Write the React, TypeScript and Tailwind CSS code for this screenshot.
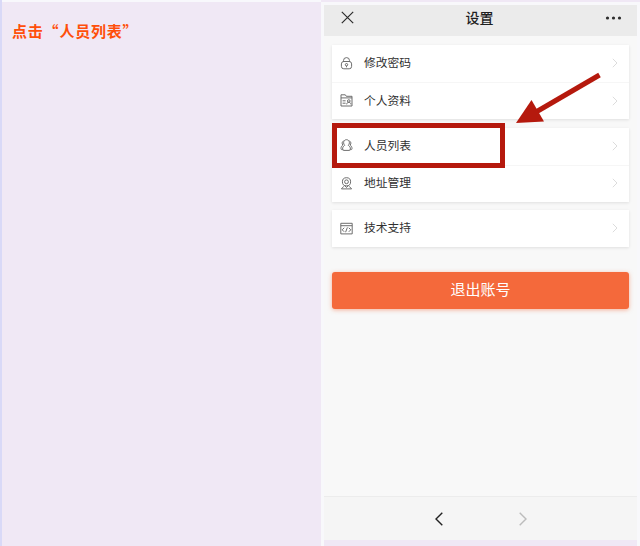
import React from 'react';

type IconName = 'lock' | 'profile' | 'people' | 'address' | 'code';

interface MenuItem {
  label: string;
  icon: IconName;
}

// Data
const groups: MenuItem[][] = [
  [
    { label: '修改密码', icon: 'lock' },
    { label: '个人资料', icon: 'profile' }
  ],
  [
    { label: '人员列表', icon: 'people' },
    { label: '地址管理', icon: 'address' }
  ],
  [{ label: '技术支持', icon: 'code' }]
];

const iconShapes: Record<IconName, React.ReactNode> = {
  lock: (
    <>
      <path d="M3.5 4.9V3.600a3 3 0 0 1 6 0v1.300" />
      <rect x="1.400" y="4.500" width="10.200" height="7.300" rx="2.400" />
      <circle cx="6.500" cy="7.700" r="1.200" />
      <path d="M6.500 8.900v1.400" />
    </>
  ),
  profile: (
    <>
      <path d="M1 12V.8h4.300l1 1.500H12V12zM1 3.900h11" />
      <path d="M2.600 6.800h3M2.600 9.200h3" />
      <circle cx="8.800" cy="7" r="1.300" />
      <path d="M6.700 10.400c0-2.800 4.200-2.800 4.200 0" />
    </>
  ),
  people: (
    <>
      <path d="M6.500.7c1.800 0 2.900 1.300 2.900 3 0 1.200-.4 2-1.100 2.600 1.500.8 2.100 2.100 2.100 3.700 0 .9-.5 1.400-1.400 1.400H4c-.9 0-1.400-.5-1.400-1.400 0-1.600.6-2.900 2.100-3.700-.7-.6-1.100-1.400-1.100-2.600 0-1.700 1.100-3 2.900-3z" />
      <path d="M3.600 1.900C1.900 2.600 1.700 4.900 2.800 6 1.500 6.900 1 8.200 1 9.600c0 .8.600 1.200 1.600 1.200M9.400 1.900c1.700.7 1.900 3 .8 4.100 1.300.9 1.800 2.200 1.800 3.600 0 .8-.6 1.200-1.600 1.200" />
    </>
  ),
  address: (
    <>
      <circle cx="6.500" cy="4.800" r="4.100" />
      <circle cx="6.500" cy="4.800" r="1.900" />
      <path d="M4.500 8.400 6.500 10.500l2-2.100M3.800 9.300 1.400 11.900h10.200L9.200 9.300" />
    </>
  ),
  code: (
    <>
      <path d="M.8 1.300h11.400v10.600H.8zM.8 3.700h11.400" />
      <path d="M4.200 5.800 2.200 7.800l2 2M8.800 5.800l2 2-2 2M7.400 5.400 5.600 10.200" />
    </>
  )
};

const ItemIcon: React.FC<{ name: IconName }> = ({ name }) => (
  <svg width="13" height="13" viewBox="0 0 13 13" fill="none" stroke="#666" strokeWidth="0.95">
    {iconShapes[name]}
  </svg>
);

const MenuRow: React.FC<{ item: MenuItem; divided: boolean }> = ({ item, divided }) => (
  <li className={`flex h-[37px] items-center pr-[11px] pb-px pl-2 ${divided ? 'border-t border-[#f6f6f6]' : ''}`}>
    <ItemIcon name={item.icon} />
    <span className="ml-[11px] flex-1 text-[11.75px] leading-4 text-[#303030]">{item.label}</span>
    <svg width="6" height="10" viewBox="0 0 6 10" fill="none" stroke="#dcdcdc">
      <path d="m.8.8 4.200 4.200-4.200 4.200" />
    </svg>
  </li>
);

const PhoneScreen: React.FC = () => (
  <div className="relative flex h-[535px] w-[313px] flex-col bg-[#f8f8f8]">
    <header className="flex h-[31px] shrink-0 items-center justify-between bg-[#ebebeb] pr-[15px] pb-[6px] pl-[17px]">
      <svg width="13" height="13" viewBox="0 0 13 13" fill="none" stroke="#2c2c2c" strokeWidth="1.200">
        <path d="m.8.8 11.400 11.400M12.200.8.8 12.200" />
      </svg>
      <h1 className="text-[14px] leading-5 font-medium text-[#1f1f1f]">设置</h1>
      <svg width="17" height="4" viewBox="0 0 17 4" fill="#2c2c2c">
        <circle cx="2.500" cy="2" r="1.600" />
        <circle cx="8.500" cy="2" r="1.600" />
        <circle cx="14.500" cy="2" r="1.600" />
      </svg>
    </header>

    {/* Menu groups */}
    <main className="flex flex-1 flex-col gap-[8.5px] px-2 pt-[9px]">
      {groups.map((group, index) => (
        <ul key={index} className="bg-white shadow-[0_1px_3px_rgba(0,0,0,0.1)]">
          {group.map((item, i) => (
            <MenuRow key={item.label} item={item} divided={i > 0} />
          ))}
        </ul>
      ))}
      <button className="mt-[16.5px] h-[37px] rounded-[3px] bg-[#f4693b] pb-px text-[15px] leading-5 text-white shadow-[0_1px_4px_rgba(244,105,59,0.5)]">
        退出账号
      </button>
    </main>

    <nav className="flex h-11 shrink-0 items-center justify-center gap-[76px] border-t border-[#ececec] bg-[#f5f5f5]">
      <svg width="8" height="14" viewBox="0 0 8 14" fill="none" stroke="#222" strokeWidth="1.400">
        <path d="M7.300.7 1 7l6.300 6.300" />
      </svg>
      <svg width="8" height="14" viewBox="0 0 8 14" fill="none" stroke="#bcbcbc" strokeWidth="1.400">
        <path d="M.7.7 7 7 .7 13.300" />
      </svg>
    </nav>

    {/* Callout frame and arrow over the menu */}
    <div className="absolute top-[118px] left-2 h-[45px] w-[173px] border-[5px] border-[#b5190d]" />
    <svg className="absolute top-[65px] left-[190px]" width="90" height="60" viewBox="0 0 90 60">
      <path d="M85.500 5 22 42" stroke="#b5190d" strokeWidth="5" />
      <path d="M2 53 17.500 30l12.500 21.500z" fill="#b5190d" />
    </svg>
  </div>
);

export default function App() {
  return (
    <div className="flex h-[546px] w-[640px] overflow-hidden border-l-2 border-[#d9d9f7] bg-[#f0e8f5] font-['Liberation_Sans','Noto_Sans_CJK_SC',sans-serif]">
      <section className="w-[319px] border-t-2 border-[#f8f8fc] pt-[17px] pl-2.5">
        <p className="font-['Noto_Sans_CJK_SC',sans-serif] text-[15px] leading-6 font-bold tracking-[0.8px] text-[#ff4f0a]">点击“人员列表”</p>
      </section>
      <section className="w-[319px] pt-0.5">
        <div className="h-full border-x-[3px] border-t-[3px] border-[#f8f8fb]">
          <PhoneScreen />
        </div>
      </section>
    </div>
  );
}
